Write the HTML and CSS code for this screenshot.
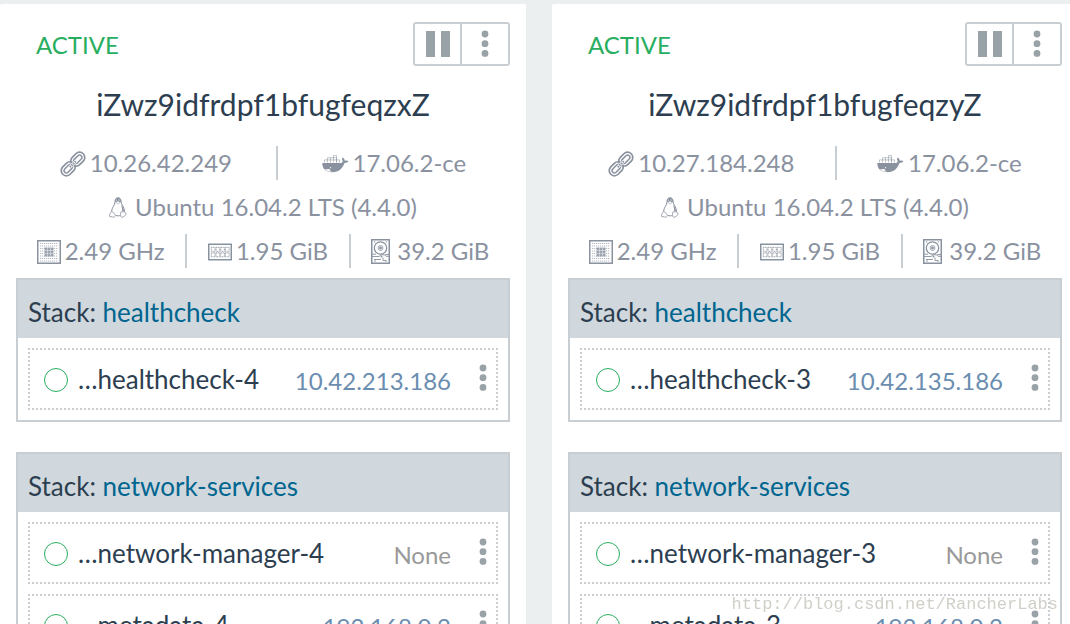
FILE: index.html
```html
<!DOCTYPE html>
<html lang="en">
<head>
<meta charset="utf-8">
<title>Hosts</title>
<link rel="stylesheet" href="styles.css">
</head>
<body>
<svg class="sprite" aria-hidden="true">
  <symbol id="i-pause" viewBox="0 0 24 26"><path fill="currentColor" d="M0 0h9v26H0zM15 0h9v26h-9z"/></symbol>
  <symbol id="i-dots" viewBox="0 0 8 28"><g fill="currentColor"><circle cx="4" cy="4" r="3.400"/><circle cx="4" cy="13.700" r="3.400"/><circle cx="4" cy="23.400" r="3.400"/></g></symbol>
  <symbol id="i-link" viewBox="0 0 26 26">
    <g transform="rotate(-45 13 13)" fill="none" stroke="currentColor">
      <rect x="-1.500" y="7.800" width="15.500" height="10.400" rx="5.200" stroke-width="1.700"/>
      <rect x="1.400" y="10.700" width="9.700" height="4.600" rx="2.300" stroke-width="1.500"/>
      <rect x="12" y="7.800" width="15.500" height="10.400" rx="5.200" stroke-width="1.700"/>
      <rect x="14.900" y="10.700" width="9.700" height="4.600" rx="2.300" stroke-width="1.500"/>
      <path d="M9 13h8" stroke="#fff" stroke-width="3"/>
      <path d="M8.500 13h9" stroke-width="2" stroke-dasharray="1.500 .8"/>
    </g>
  </symbol>
  <symbol id="i-docker" viewBox="0 0 27 18">
    <path fill="currentColor" d="M.3 8h18.400c1.400 0 2-.8 2-2-.9-1.200-.9-2.500.1-3.500 1.300.9 1.900 2 1.900 3.200 1.300-.4 2.700-.2 3.800.4-.7 1.300-2.100 1.900-4 1.900C20.500 13.500 17 17.200 10.500 17.200 3.700 17.200.3 14 .3 8z"/>
    <path fill="#fff" d="M2.800 14.200c1.800.1 3.500 0 4.800-.5-.2 1.200.8 2.400 2.500 2.800-3 .3-5.600-.4-7.300-2.300z"/><circle cx="8.600" cy="12.700" r=".6" fill="#fff"/>
    <path fill="none" stroke="currentColor" stroke-width=".7" opacity=".75" d="M2.500 7.500v-2.600h15v2.600M5.500 7.500V2.700h9v4.800M8.500 7.500V2.700M11.500 7.500V.5h3v7"/>
  </symbol>
  <symbol id="i-linux" viewBox="0 0 18 21">
    <path fill="none" stroke="currentColor" d="M6 5C5.800 2.200 7 .8 9 .8s3.200 1.400 3.100 4c0 2.700 3.300 5.300 3.500 9.700M6 5c.1 2.800-3.200 5.500-3.400 9.500M6.800 18.300c1.500.8 3.200.7 4.600 0"/>
    <path fill="currentColor" d="M6.200 4.800C6.200 2 7.200.8 9 .8s3 1.300 3 4L10.300 6 8.700 5.200zM12 8c2.200 2 3 4 2.800 6.500l-1.600-.2C13.400 11.500 12.500 9.500 12 8z"/>
    <path fill="#fff" stroke="currentColor" stroke-width=".8" d="M2.700 14.200c1.500.8 2.500 2.500 3.700 4.100-.4 2-1.700 2.200-3 1.700L.6 19.300c.2-1.500-.1-2.300.4-2.900.8-.3 1.200-1.300 1.700-2.200zM15.400 14.200c.5 1.500 1.200 2.300 2 3-1 1.500-2.500 2-3.700 3-1.400.2-2.300-.5-2.200-1.900.3-1.500 0-3.300.9-3.900.9.800 2.200.7 3-.2z"/>
    <path fill="#fff" stroke="currentColor" stroke-width=".5" d="M6.700 5.200L9 4l2.300 1.200L9 7z"/>
    <path stroke="#fff" stroke-width=".9" d="M7.500 2.600v1M10.200 2.600v1"/>
  </symbol>
  <symbol id="i-cpu" viewBox="0 0 24 24">
    <rect x=".75" y=".75" width="22.500" height="22.500" fill="none" stroke="currentColor" stroke-width="1.500"/>
    <path fill="none" stroke="currentColor" stroke-width="1" stroke-dasharray="1.200 .8" d="M3 3.500h18M3 6h18M3 8.500h18M3 11h18M3 13.500h18M3 16h18M3 18.500h18M3 21h18" opacity=".65"/>
    <rect x="7.500" y="7.500" width="9" height="9" fill="currentColor" opacity=".8"/>
    <path stroke="#fff" stroke-width=".4" d="M10.500 7v10M13.500 7v10M7 10.500h10M7 13.500h10"/>
  </symbol>
  <symbol id="i-memory" viewBox="0 0 24 18">
    <rect x=".75" y="1.250" width="22.500" height="15.500" fill="none" stroke="currentColor" stroke-width="1.500"/>
    <g fill="none" stroke="currentColor" stroke-width=".8" stroke-dasharray="1.300 .5"><path d="M3.300 4.300h3.700v4h-3.700zM8 4.300h3.700v4H8zM12.700 4.300h3.700v4h-3.700zM17.400 4.300h3.700v4h-3.700zM3.300 9.800h3.700v4h-3.700zM8 9.800h3.700v4H8zM12.700 9.800h3.700v4h-3.700zM17.400 9.800h3.700v4h-3.700z"/></g>
  </symbol>
  <symbol id="i-disk" viewBox="0 0 19 25">
    <g fill="none" stroke="currentColor">
      <rect x=".75" y=".75" width="17.500" height="23.500" stroke-width="1.500"/>
      <circle cx="9.500" cy="9" r="6.200" stroke-width="1.300"/><circle cx="9.500" cy="9" r="2.500" stroke-width=".8"/>
      <path stroke-width=".9" d="M1 15.200h4M1 17.500h7l2-1.700h3.500l1.500 1.500h3M3 20.500h7M12 18.500v3h3M14 15.500h4M3 3h1.500M14.500 3H16M3 22h2M14 22h2"/>
    </g>
    <circle cx="9.500" cy="9" r="1.400" fill="currentColor"/><circle cx="10.500" cy="17.500" r="1" fill="currentColor"/>
  </symbol>
</svg>

<main class="hosts">
  <article class="host">
    <header class="host-top">
      <span class="state">ACTIVE</span>
      <div class="actions">
        <button class="action" type="button" aria-label="Deactivate"><svg class="pause"><use href="#i-pause"/></svg></button>
        <button class="action" type="button" aria-label="More actions"><svg class="dots"><use href="#i-dots"/></svg></button>
      </div>
    </header>
    <h2 class="name">iZwz9idfrdpf1bfugfeqzxZ</h2>
    <div class="facts">
      <div class="row">
        <span class="fact"><svg class="link"><use href="#i-link"/></svg>10.26.42.249</span>
        <span class="fact"><svg class="docker"><use href="#i-docker"/></svg>17.06.2-ce</span>
      </div>
      <div class="row">
        <span class="fact"><svg class="linux"><use href="#i-linux"/></svg>Ubuntu 16.04.2 LTS (4.4.0)</span>
      </div>
      <div class="row">
        <span class="fact"><svg class="cpu"><use href="#i-cpu"/></svg>2.49 GHz</span>
        <span class="fact"><svg class="memory"><use href="#i-memory"/></svg>1.95 GiB</span>
        <span class="fact"><svg class="disk"><use href="#i-disk"/></svg>39.2 GiB</span>
      </div>
    </div>
    <section class="stack">
      <h3 class="stack-title">Stack: <a href="#">healthcheck</a></h3>
      <ul class="containers">
        <li class="container"><span class="running"></span><span class="label">…healthcheck-4</span><span class="ip">10.42.213.186</span><button class="menu" type="button" aria-label="Container actions"><svg class="dots"><use href="#i-dots"/></svg></button></li>
      </ul>
    </section>
    <section class="stack">
      <h3 class="stack-title">Stack: <a href="#">network-services</a></h3>
      <ul class="containers">
        <li class="container"><span class="running"></span><span class="label">…network-manager-4</span><span class="ip none">None</span><button class="menu" type="button" aria-label="Container actions"><svg class="dots"><use href="#i-dots"/></svg></button></li>
        <li class="container"><span class="running"></span><span class="label">…metadata-4</span><span class="ip">192.168.0.2</span><button class="menu" type="button" aria-label="Container actions"><svg class="dots"><use href="#i-dots"/></svg></button></li>
      </ul>
    </section>
  </article>

  <article class="host">
    <header class="host-top">
      <span class="state">ACTIVE</span>
      <div class="actions">
        <button class="action" type="button" aria-label="Deactivate"><svg class="pause"><use href="#i-pause"/></svg></button>
        <button class="action" type="button" aria-label="More actions"><svg class="dots"><use href="#i-dots"/></svg></button>
      </div>
    </header>
    <h2 class="name">iZwz9idfrdpf1bfugfeqzyZ</h2>
    <div class="facts">
      <div class="row">
        <span class="fact"><svg class="link"><use href="#i-link"/></svg>10.27.184.248</span>
        <span class="fact"><svg class="docker"><use href="#i-docker"/></svg>17.06.2-ce</span>
      </div>
      <div class="row">
        <span class="fact"><svg class="linux"><use href="#i-linux"/></svg>Ubuntu 16.04.2 LTS (4.4.0)</span>
      </div>
      <div class="row">
        <span class="fact"><svg class="cpu"><use href="#i-cpu"/></svg>2.49 GHz</span>
        <span class="fact"><svg class="memory"><use href="#i-memory"/></svg>1.95 GiB</span>
        <span class="fact"><svg class="disk"><use href="#i-disk"/></svg>39.2 GiB</span>
      </div>
    </div>
    <section class="stack">
      <h3 class="stack-title">Stack: <a href="#">healthcheck</a></h3>
      <ul class="containers">
        <li class="container"><span class="running"></span><span class="label">…healthcheck-3</span><span class="ip">10.42.135.186</span><button class="menu" type="button" aria-label="Container actions"><svg class="dots"><use href="#i-dots"/></svg></button></li>
      </ul>
    </section>
    <section class="stack">
      <h3 class="stack-title">Stack: <a href="#">network-services</a></h3>
      <ul class="containers">
        <li class="container"><span class="running"></span><span class="label">…network-manager-3</span><span class="ip none">None</span><button class="menu" type="button" aria-label="Container actions"><svg class="dots"><use href="#i-dots"/></svg></button></li>
        <li class="container"><span class="running"></span><span class="label">…metadata-3</span><span class="ip">192.168.0.2</span><button class="menu" type="button" aria-label="Container actions"><svg class="dots"><use href="#i-dots"/></svg></button></li>
      </ul>
    </section>
  </article>
</main>
<div class="watermark">http://blog.csdn.net/RancherLabs</div>
</body>
</html>
```
FILE: styles.css
```css
* { box-sizing: border-box; }

body {
  margin: 0;
  height: 100vh;
  overflow: hidden;
  background: #ebeff0;
  color: #2c3e50;
  font-family: Lato, "Liberation Sans", sans-serif;
  font-size: 24px;
}

.sprite { display: none; }
svg { display: block; flex: none; }

/* The second column runs slightly past the right edge of the window. */
.hosts {
  display: grid;
  grid-template-columns: 1fr 1fr;
  gap: 26px;
  margin-right: -8px;
  padding-top: 4px;
}

.host {
  min-width: 0;
  padding: 18px 16px 30px;
  background: #fff;
  border-radius: 2px;
}

.host-top {
  display: flex;
  justify-content: space-between;
  align-items: center;
  height: 44px;
  padding-left: 20px;
}

.state { color: #27ae60; }

.actions {
  display: flex;
  border: 2px solid #c8ced2;
  border-radius: 3px;
}

.action {
  display: flex;
  align-items: center;
  justify-content: center;
  width: 45px;
  height: 40px;
  padding: 0;
  border: 0;
  background: none;
  color: #98a2a7;
}

.action + .action {
  width: 48px;
  border-left: 2px solid #c8ced2;
}

.pause { width: 24px; height: 26px; }
.dots { width: 8px; height: 28px; }

.name {
  margin: 18px 0 22px;
  font-size: 30px;
  font-weight: 400;
  line-height: 40px;
  text-align: center;
}

.facts {
  display: grid;
  gap: 10px;
  margin-bottom: 10px;
  color: #8a919f;
}

.row { display: flex; height: 34px; }

.fact {
  display: flex;
  flex: 1 1 auto;
  align-items: center;
  justify-content: center;
  gap: 4px;
  padding-bottom: 2px;
  white-space: nowrap;
}

.fact svg { margin-top: 3px; }

.fact + .fact { border-left: 2px solid #c8ced2; }

.link { width: 26px; height: 26px; }
.docker { width: 27px; height: 18px; }
.linux { width: 18px; height: 21px; margin-right: 4px; }
.cpu { width: 24px; height: 24px; }
.memory { width: 24px; height: 18px; }
.disk { width: 19px; height: 25px; margin-right: 3px; }

.stack {
  margin-bottom: 30px;
  border: 2px solid #c8ced2;
}

.stack-title {
  margin: 0;
  padding: 16px 10px 10px;
  background: #d0d8de;
  font-size: 26px;
  font-weight: 400;
  line-height: 32px;
}

.stack-title a { color: #00658f; text-decoration: none; }

.containers {
  display: grid;
  gap: 10px;
  margin: 0;
  padding: 10px;
  list-style: none;
}

.container {
  display: flex;
  align-items: center;
  height: 62px;
  padding: 0 9px 0 14px;
  border: 2px dotted #c8ced2;
}

.running {
  width: 24px;
  height: 24px;
  margin: 2px 10px 0 0;
  border: 1px solid #27ae60;
  border-radius: 50%;
}

.label { font-size: 26px; }
.ip { margin-left: auto; padding-top: 2px; color: #6a8db0; }
.none { color: #999; }

.menu {
  margin-left: 28px;
  padding: 0 0 2px;
  border: 0;
  background: none;
  color: #98a2a7;
}

.watermark {
  position: fixed;
  right: 12px;
  bottom: 9px;
  color: #d0cfc8;
  font-family: "Liberation Mono", monospace;
  font-size: 17px;
  line-height: 20px;
}
```
